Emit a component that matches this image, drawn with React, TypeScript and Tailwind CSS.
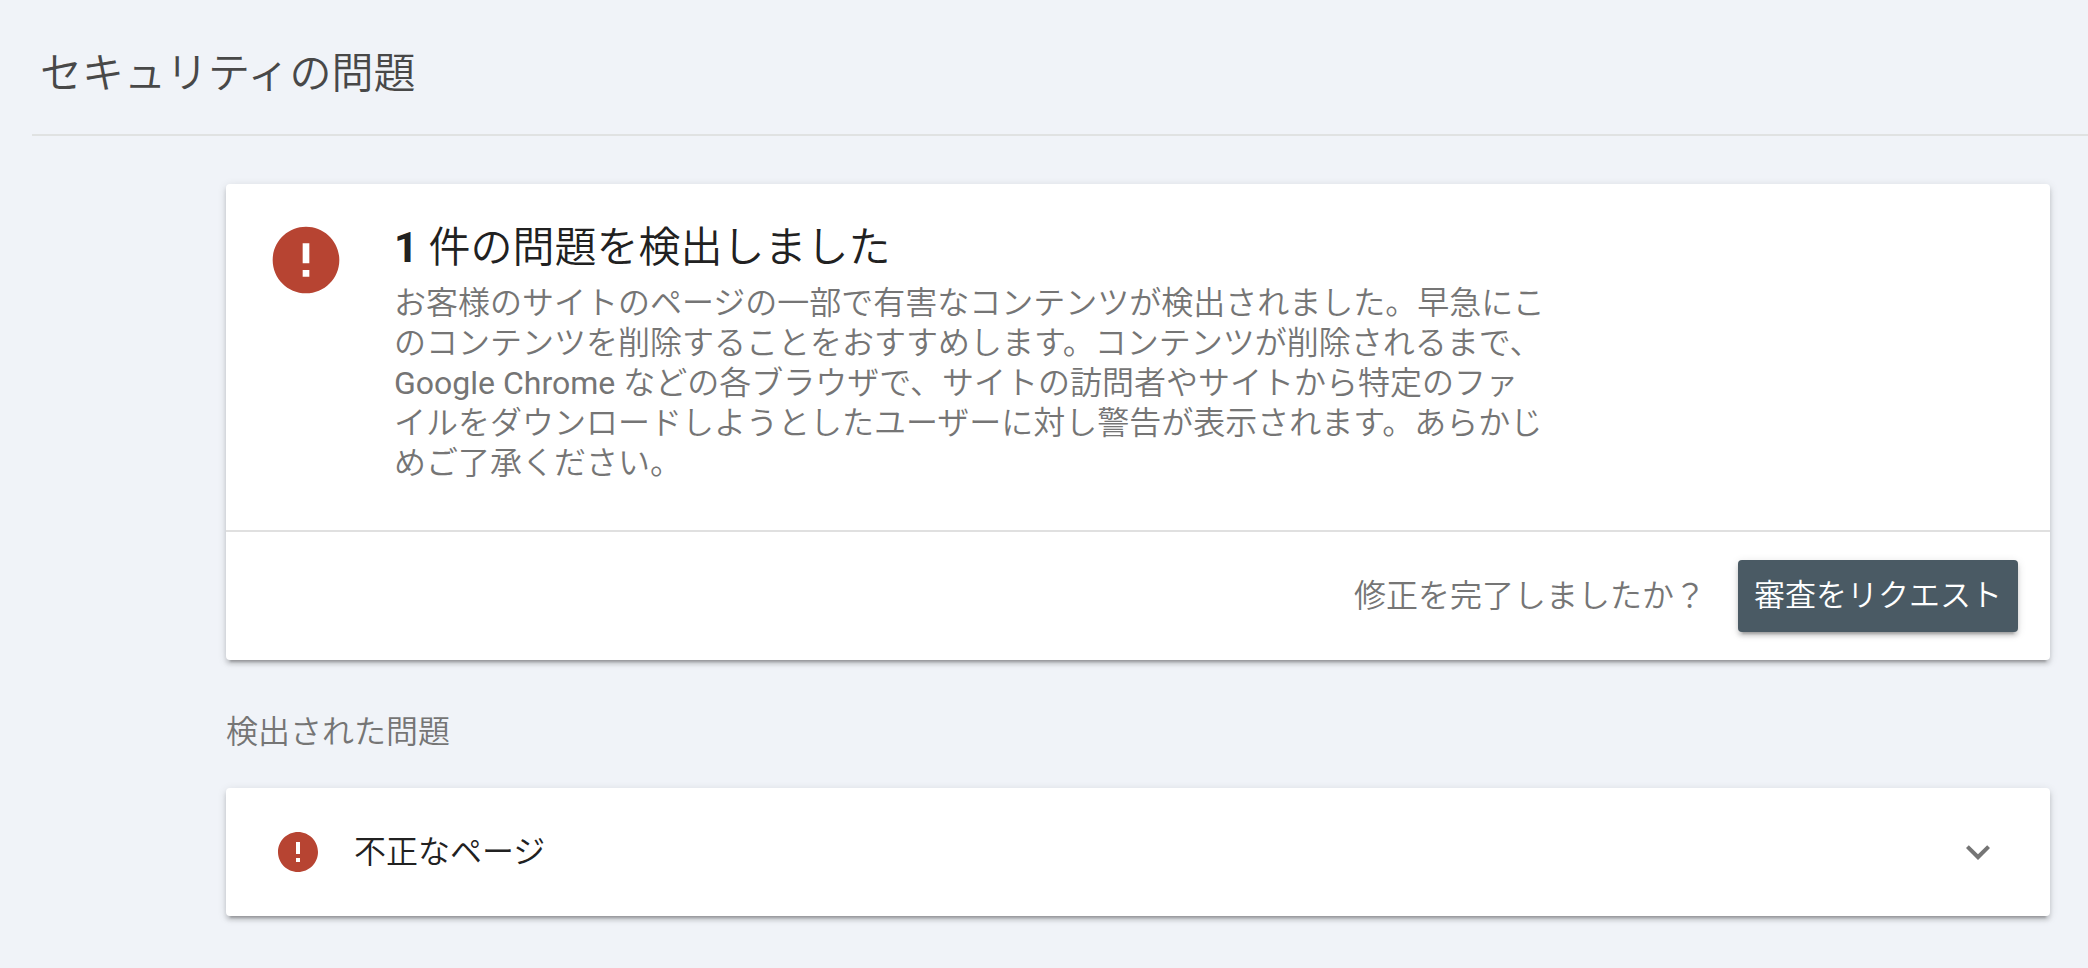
const cardShadow =
  'rounded bg-white shadow-[0_4px_4px_rgba(0,0,0,0.14),0_6px_2px_-4px_rgba(0,0,0,0.2),0_2px_10px_rgba(0,0,0,0.12)]';

function ErrorIcon({ className }: { className: string }) {
  return (
    <svg viewBox="0 0 24 24" className={className} fill="currentColor" aria-hidden="true">
      <path d="M12 2C6.48 2 2 6.48 2 12s4.48 10 10 10 10-4.48 10-10S17.52 2 12 2zm1 15h-2v-2h2v2zm0-4h-2V7h2v6z" />
    </svg>
  );
}

function ChevronIcon() {
  return (
    <svg viewBox="0 0 24 24" className="size-12 shrink-0 text-[#757575]" fill="currentColor" aria-hidden="true">
      <path d="M16.59 8.59L12 13.17 7.41 8.59 6 10l6 6 6-6z" />
    </svg>
  );
}

export default function App() {
  return (
    <div
      lang="ja"
      className="min-h-screen bg-[#f0f3f8] pb-[52px] pl-8 font-['Roboto','Noto_Sans_CJK_JP_DemiLight','Noto_Sans_CJK_JP',sans-serif] font-normal text-[#757575]"
    >
      <header className="border-b-2 border-[#e0e2e2] px-2 pt-[42px] pb-7">
        <h1 className="text-[42px] leading-[64px] text-[#484848]">セキュリティの問題</h1>
      </header>

      <main className="mr-[38px] ml-[194px] pt-12">
        <section className={cardShadow}>
          <div className="flex gap-12 px-10 pt-9 pb-[47px]">
            <ErrorIcon className="size-20 shrink-0 text-[#b74432]" />
            <div className="min-w-0">
              <h2 className="text-[42px] leading-[56px] text-[#212121]">
                <span className="font-bold">1</span> 件の問題を検出しました
              </h2>
              <p className="mt-[7px] max-w-6xl text-[32px] leading-10">
                お客様のサイトのページの一部で有害なコンテンツが検出されました。早急にこのコンテンツを削除することをおすすめします。コンテンツが削除されるまで、Google
                Chrome
                などの各ブラウザで、サイトの訪問者やサイトから特定のファイルをダウンロードしようとしたユーザーに対し警告が表示されます。あらかじめご了承ください。
              </p>
            </div>
          </div>
          <div className="flex items-center justify-end gap-8 border-t-2 border-[#e0e0e0] px-8 py-7">
            <span className="text-[32px] leading-10">修正を完了しましたか？</span>
            <button
              type="button"
              className="h-[72px] rounded bg-[#4a5a64] px-4 text-[31px] leading-10 text-white shadow-[0_4px_4px_rgba(0,0,0,0.14),0_6px_2px_-4px_rgba(0,0,0,0.2),0_2px_10px_rgba(0,0,0,0.12)]"
            >
              審査をリクエスト
            </button>
          </div>
        </section>

        <h3 className="mt-[52px] mb-9 text-[32px] leading-10">検出された問題</h3>

        <button type="button" aria-expanded="false" className={`flex h-32 w-full items-center px-12 text-left ${cardShadow}`}>
          <ErrorIcon className="size-12 shrink-0 text-[#b74432]" />
          <span className="ml-8 flex-1 text-[32px] leading-10 text-[#212121]">不正なページ</span>
          <ChevronIcon />
        </button>
      </main>
    </div>
  );
}
